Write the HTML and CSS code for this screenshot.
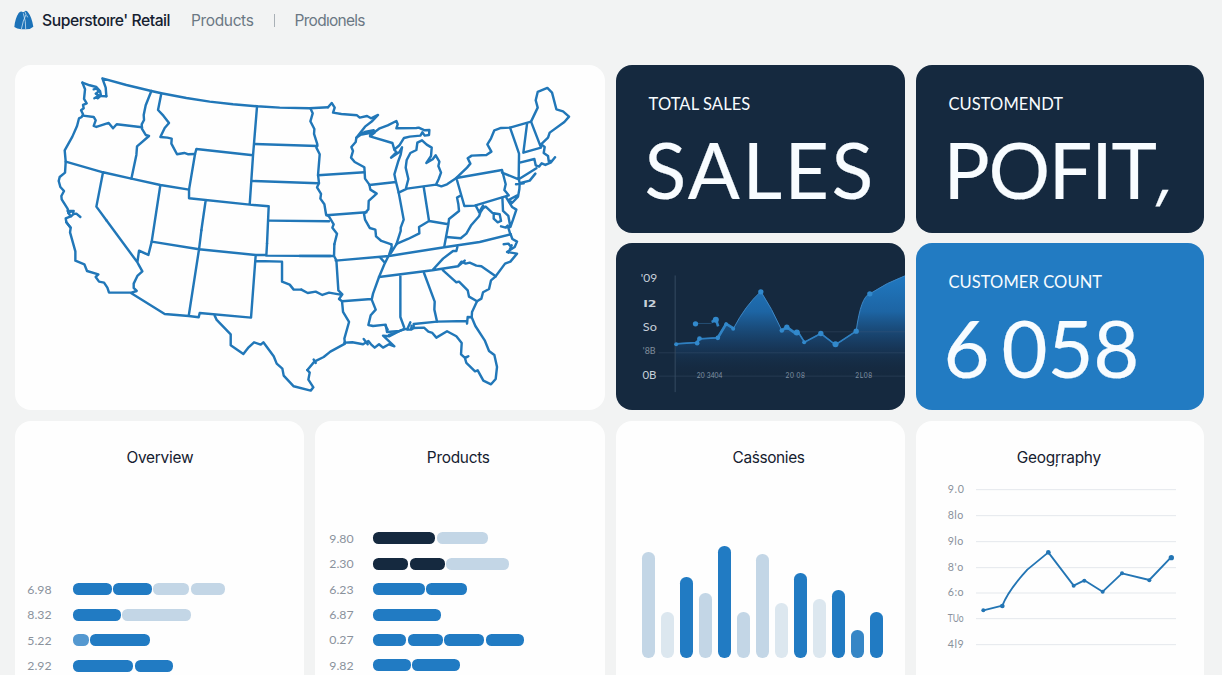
FILE: index.html
```html
<!DOCTYPE html>
<html lang="en">
<head>
<meta charset="utf-8">
<title>Superstore Retail</title>
<link rel="stylesheet" href="styles.css">
</head>
<body>
<header class="topbar">
  <svg class="logo" viewBox="0 0 60 60" width="20" height="20">
    <path d="M14 9Q20 1 27 7L31 5Q37-1 43 8Q53 20 58 50Q50 58 36 58H22Q8 57 1 51Q3 26 14 9Z" fill="#1c72b8"/>
    <path d="M22 58L28 33L36 14L33 5M35 57L34 35L28 10M38 16L41 22" fill="none" stroke="#d9ecf8" stroke-width="2.2"/>
  </svg>
  <span class="brand">Superstoıre' Retail</span>
  <nav class="nav"><a>Products</a><i class="sep"></i><a class="second">Prodıonels</a></nav>
</header>
<main class="grid">
  <section class="card map">
    <svg viewBox="15.3 64.7 590 345.5" width="590" height="345.5">
      <g class="states" transform="translate(40 64) scale(.33333)">
        <path d="M200 96L198 70L188 42L260 62L335 80L365 87L440 101L510 112L580 120L652 126L720 130L810 132L865 129"/>
        <path d="M128 55L150 63L170 68L181 80L184 95L200 96M162 75l10-3l4 10l-8 6l10 6l-14 8M184 94l-10 8"/>
        <path d="M128 55L136 75L133 104L141 117L130 122L132 132L124 138L130 150L126 158L118 162L112 185L98 217L75 258L78 292L76 325L60 338L57 350L62 368L73 380L65 395L66 405L84 434L86 446L93 456L78 462L80 474L92 490"/>
        <path d="M130 154L162 158L168 168L162 185L170 188L207 176L220 192L231 180L307 189"/>
        <path d="M335 80L318 123L312 152L313 167L306 180L307 194L318 212L328 215L292 246L290 272L275 343"/>
        <path d="M365 87L355 137L371 154L388 176L375 191L362 218L383 220L396 223L395 238L412 270L434 266L446 270L466 269"/>
        <path d="M78 292L190 324L275 343L362 362L448 376M190 324L170 427L200 468M362 362L336 532"/>
        <path d="M466 269L470 254L640 273M466 269L448 376L448 402L630 421L687 426L682 538M652 126L640 273L630 421M498 408L485 498"/>
        <path d="M645 239L833 245M638 350L835 357M687 469L868 471"/>
        <path d="M86 446l12-6l4 9l8-1l12 10M84 440l18 0M94 456l9-8"/>
      </g>
      <g class="states" transform="translate(300 64) scale(.33333)">
        <path d="M85 129L96 116L105 130L100 145L125 149L172 153L180 160L202 155L214 162L235 152L218 170L196 187L170 220L195 203L222 198L211 214L240 192L264 183L290 170L294 180L290 192L350 191L357 190L375 198L389 197L388 212L375 214L368 204L362 214L330 217L313 221L300 242L284 256L278 236L211 216L225 205M178 212L210 206"/>
        <path d="M32 132L39 147L32 171L44 194L43 209L53 240L50 250L60 270L55 332L58 357L52 369L64 389L62 403L74 420L79 450L88 457L102 480L98 490L112 508L104 540"/>
        <path d="M170 220L168 233L155 248L160 260L154 280L165 293L194 309L196 343L209 361L212 376L231 388L207 410L206 435L193 449L196 466L210 491L227 496L229 516L245 530L275 540"/>
        <path d="M55 333L194 324M80 453L200 444M209 362L289 353M284 256L290 264L274 280L300 262L307 249L303 271L296 290L284 330L289 353L297 385L312 466L303 490L303 500L290 540"/>
        <path d="M297 385L322 373L409 361L425 366L442 360L470 341L502 310L512 298L504 282L516 274L560 272L575 262L563 240L574 222L584 198L604 191L631 190L694 172M318 375L326 344L318 310L321 287L332 266L350 257L353 235L367 228L381 241L396 250L394 275L380 296L399 285L408 273L419 292L416 305L424 325L417 344L409 361"/>
        <path d="M372 368L388 470L446 480M470 341L494 425L525 424L627 393L614 377L618 360L607 317L470 341M388 470L358 488L359 507L325 524L292 538M484 393L472 400L476 420L478 440L448 464L446 480L434 545"/>
        <path d="M631 190L647 236L658 268L657 343L660 357M607 325L657 345L710 312M694 172L714 130L708 108L714 83L743 71L757 85L770 135L790 141L808 157L794 173L750 205L745 220L724 240M694 172L724 250L671 265L682 179M724 240L735 248L732 266L745 275L747 290L757 290L766 279L754 294L737 302L726 297L718 307L708 303L704 284L660 295M660 357L690 349L707 328M660 357L659 374L655 397L637 416L629 406L653 393M620 400L637 428L650 436L640 466L632 488L620 488M608 400L610 440L626 455L632 488M649 360L672 357"/>
        <path d="M528 424L540 447L550 432L558 427L578 446L600 450L604 470L594 474L582 463L582 450M545 436L538 456L515 482L500 508L483 522L440 518M604 486L618 490L624 484L632 510M550 424l-12 20"/>
      </g>
      <g class="states" transform="translate(40 220) scale(.33333)">
        <path d="M80 6L93 22L91 36L107 93L107 121L134 132L142 152L176 162L168 170L178 184L193 187L203 202L208 217L275 217L291 212L282 203L282 190L293 167L308 153L293 126L200 0M293 126L298 91L326 104L336 64M275 219L375 281L447 287L477 291L480 278L634 292L648 104L680 104L682 70M336 64L478 87L648 104M478 87L447 287M478 87L485 30M680 106L872 107M650 122L727 124L727 184L750 193L762 208L785 208"/>
        <path d="M525 286L531 299L573 342L573 375L611 401L625 383L643 366L663 373L671 366L702 408L711 430L728 445L732 466L762 498L813 511L821 501L806 478L810 457L803 449"/>
      </g>
      <g class="states" transform="translate(300 220) scale(.33333)">
        <path d="M0 107L103 107M104 72L103 107L110 120L116 210L128 222L118 236L127 243L130 275L148 305L134 355L136 370L92 394L72 410L44 424L23 449M42 418l6 10M5 208L24 218L48 214L68 224L88 217L122 223"/>
        <path d="M108 121L268 107L434 81L540 65L633 42M127 243L215 236M275 72L276 80L268 104L254 132L238 170L220 220L216 238L228 268L213 285L206 314L220 317L258 313L262 335L300 332L316 326M242 112L254 126M290 72L274 98"/>
        <path d="M238 170L398 150L475 138L495 121M302 164L302 290L313 320M373 158L405 244L404 268L412 304L342 311L342 323M398 150L430 115L460 92L470 92L473 80M430 150L470 186L478 184L504 210L508 229L532 243M475 138L485 124L498 130L510 127L530 136L545 138L588 168"/>
        <path d="M412 304L502 302L502 310L504 290L516 291L517 275L532 243L545 235L550 216L568 206L574 180L588 168L616 130L632 124L652 100L622 95L645 80L652 64L638 56L633 42M612 72l14-2l8 10M636 75l-10 22"/>
        <path d="M134 367L158 366L190 372L206 362L214 372L225 382L238 372L250 382L268 372L284 378L262 357L250 346L268 348L300 332L316 326L334 328L342 323L373 322L386 334L398 338L410 352L442 333L470 348L486 368L484 402L495 412L506 408L496 414L500 428L526 453L534 450L551 481L574 492L588 476L592 440L584 404L568 392L555 360L527 317L516 291M192 356l12 16M268 344l18-6M322 328l10-22M334 328l2-12M258 318l6 10"/>
      </g>
    </svg>
  </section>
  <section class="card kpi dark"><h2>TOTAL SALES</h2><p class="value sales">SALES</p></section>
  <section class="card kpi dark"><h2>CUSTOMENDT</h2><p class="value profit">POFIT<span class="comma">,</span></p></section>
  <section class="card dark trend">
    <svg viewBox="17.5 9.6 867 501" width="289" height="167">
      <defs>
        <linearGradient id="fill" gradientUnits="userSpaceOnUse" x1="0" y1="110" x2="0" y2="410">
          <stop offset="0" stop-color="#2078c0"/><stop offset=".35" stop-color="#1d65a4"/><stop offset=".7" stop-color="#183e66" stop-opacity=".7"/><stop offset="1" stop-color="#15293f" stop-opacity="0"/>
        </linearGradient>
      </defs>
      <path d="M197 312L260 308L268 297L323 294L348 252L370 266Q405 198 452 155Q485 205 515 272L530 262L558 282L563 275L583 307L632 281L676 315L738 274Q752 170 779 162Q830 128 887 107V410H197Z" fill="url(#fill)"/>
      <g stroke="#496078" stroke-width="1.6" opacity=".6"><path d="M145 339H887M145 409H887M520 276H887"/><path d="M195 107V457" stroke-width="3"/></g>
      <path class="trend-line" d="M197 312L260 308L268 297L323 294L348 252L370 266Q405 198 452 155Q485 205 515 272L530 262L558 282L563 275L583 307L632 281L676 315L738 274Q752 170 779 162Q830 128 887 107"/>
      <path class="trend-bold" d="M197 312L260 308L268 297L323 294L348 252L370 266M515 272L530 262L558 282L563 275L583 307L632 281L676 315L738 274"/>
      <path class="trend-line" d="M256 251H302L317 240" opacity=".4"/>
      <path d="M305 247L317 238L324 260M260 309L268 296M323 294L348 252L370 266M515 272L530 262L558 282" fill="none" stroke="#3083c4" stroke-width="8"/>
      <g fill="#3289cc"><circle cx="198" cy="313" r="6"/><circle cx="256" cy="252" r="8"/><circle cx="317" cy="240" r="9"/><circle cx="261" cy="310" r="7"/><circle cx="268" cy="296" r="7"/><circle cx="323" cy="294" r="7"/><circle cx="348" cy="253" r="6"/><circle cx="369" cy="267" r="6"/><circle cx="452" cy="156" r="8"/><circle cx="515" cy="272" r="7"/><circle cx="530" cy="262" r="8"/><circle cx="560" cy="278" r="9"/><circle cx="582" cy="307" r="6"/><circle cx="632" cy="281" r="8"/><circle cx="676" cy="313" r="9"/><circle cx="738" cy="274" r="8"/><circle cx="779" cy="162" r="8"/></g>
      <g class="trend-axis"><text x="92" y="128" textLength="49" lengthAdjust="spacingAndGlyphs">'09</text><text x="99" y="202" textLength="40" lengthAdjust="spacingAndGlyphs" class="strong">I2</text><text x="98" y="275" textLength="42" lengthAdjust="spacingAndGlyphs">So</text><text x="98" y="343" textLength="38" lengthAdjust="spacingAndGlyphs" class="dim">'8B</text><text x="97" y="418" textLength="42" lengthAdjust="spacingAndGlyphs">0B</text></g>
      <g class="trend-x"><text x="260" y="414" textLength="77">20 3404</text><text x="526" y="414" textLength="58">20 08</text><text x="735" y="414" textLength="51">2L08</text></g>
    </svg>
  </section>
  <section class="card kpi blue"><h2 class="count-label">CUSTOMER COUNT</h2><p class="value count">6<span class="digits">058</span></p></section>

  <section class="card panel">
    <h3>Overview</h3>
    <div class="hbars short">
      <div class="row"><span>6.98</span><b style="width:39px"></b><b style="width:38.7px"></b><b class="pale" style="width:35.7px"></b><b class="pale" style="width:34.3px"></b></div>
      <div class="row"><span>8.32</span><b style="width:48px"></b><b class="pale" style="width:69px"></b></div>
      <div class="row"><span>5.22</span><b class="mid" style="width:16px"></b><b style="width:59.5px"></b></div>
      <div class="row"><span>2.92</span><b style="width:60.3px"></b><b style="width:38.3px"></b></div>
    </div>
  </section>
  <section class="card panel">
    <h3 class="t-products">Products</h3>
    <div class="hbars">
      <div class="row"><span>9.80</span><b class="navy" style="width:62px"></b><b class="pale" style="width:51.7px"></b></div>
      <div class="row"><span>2.30</span><b class="navy" style="width:35px"></b><b class="navy" style="width:35.3px"></b><b class="pale" style="width:63px"></b></div>
      <div class="row"><span>6.23</span><b style="width:51.7px"></b><b style="width:40.7px"></b></div>
      <div class="row"><span>6.87</span><b style="width:68px"></b></div>
      <div class="row"><span>0.27</span><b style="width:33px"></b><b style="width:35px"></b><b style="width:40.3px"></b><b style="width:38.3px"></b></div>
      <div class="row"><span>9.82</span><b style="width:37.7px"></b><b style="width:48px"></b></div>
    </div>
  </section>
  <section class="card panel">
    <h3 class="t-cat">Caṡsonies</h3>
    <div class="vbars">
      <b class="pale" style="height:105.7px"></b><b class="faint" style="height:45.7px"></b><b style="height:80.7px"></b><b class="pale" style="height:65.3px"></b><b style="height:111.7px"></b><b class="pale" style="height:45.7px"></b><b class="pale" style="height:103.7px"></b><b class="faint" style="height:54.7px"></b><b style="height:84.7px"></b><b class="faint" style="height:59.3px"></b><b style="height:67.7px"></b><b class="mid2" style="height:27.7px"></b><b style="height:46.3px"></b>
    </div>
  </section>
  <section class="card panel">
    <h3 class="t-geo">Geogŗraphy</h3>
    <svg class="geo" viewBox="18 170 864 540" width="288" height="180">
      <path d="M198 208H798M198 286H798M198 364H798M198 442H798M198 518H798M198 595H798M198 673H798" stroke="#e4e8ec" stroke-width="3"/>
      <path d="M220 570L277 556Q295 510 352 448L415 396L491 496L523 480L578 514L636 459L718 479L783 411" fill="none" stroke="#2375b4" stroke-width="5.5" stroke-linejoin="round"/>
      <g fill="#2375b4"><circle cx="220" cy="570" r="6"/><circle cx="277" cy="557" r="7"/><circle cx="415" cy="396" r="7"/><circle cx="491" cy="496" r="6"/><circle cx="523" cy="481" r="6"/><circle cx="578" cy="514" r="6"/><circle cx="636" cy="459" r="6"/><circle cx="718" cy="480" r="6"/><circle cx="784" cy="412" r="8"/></g>
      <g class="geo-axis"><text x="113" y="219" textLength="49">9.0</text><text x="113" y="296" textLength="47">8lo</text><text x="113" y="374" textLength="47">9lo</text><text x="113" y="451" textLength="47">8'o</text><text x="113" y="528" textLength="48">6:o</text><text x="113" y="605" textLength="48" lengthAdjust="spacingAndGlyphs">TUo</text><text x="113" y="682" textLength="48">4l9</text></g>
    </svg>
  </section>
</main>
</body>
</html>
```
FILE: styles.css
```css
* { box-sizing: border-box; }
body {
  margin: 0;
  height: 675px;
  overflow: hidden;
  background: #f2f3f3;
  color: #15202f;
  font-family: Lato, "Open Sans", sans-serif;
}
h2, h3, p { margin: 0; font-weight: 400; }
.topbar {
  display: flex;
  align-items: center;
  height: 40px;
  padding-left: 14px;
  margin-bottom: 24.7px;
}
.brand { margin-left: 8px; width: 149px; font: 500 15.7px Inter, sans-serif; letter-spacing: -.46px; white-space: nowrap; }
.nav { display: flex; align-items: center; color: #6b7884; font: 400 15.5px Inter, sans-serif; letter-spacing: -.36px; }
.nav .second { letter-spacing: -.72px; }
.sep { width: 1px; height: 13px; margin: 0 20px; background: #a9b0b6; }
.grid {
  display: grid;
  grid-template-columns: 289.2px 290px 289px 288px;
  grid-template-rows: 168px 167px 270px;
  gap: 10.5px 10.8px;
  padding-left: 15.3px;
}
.card { border-radius: 16px; background: #fefefe; overflow: hidden; }
.map { grid-column: span 2; grid-row: span 2; }
.map svg, .trend svg, .geo { display: block; }
.states path { fill: none; stroke: #2177b8; stroke-width: 7.3; stroke-linejoin: round; stroke-linecap: round; }
.dark { background: #15293f; }
.blue { background: #227bc2; }
.kpi { padding: 28px 0 0 32.5px; color: #f8fcff; }
.kpi h2 { font-size: 16.5px; line-height: 22px; letter-spacing: .1px; white-space: nowrap; }
.value { margin-left: -4px; font-size: 77px; line-height: 92px; margin-top: 8px; white-space: nowrap; -webkit-text-stroke: .2px #f8fcff; }
.sales { letter-spacing: 2.5px; }
.profit { letter-spacing: -1.2px; margin-left: -5px; }
.comma { display: inline-block; height: 60px; font: 400 60px/60px Inter, sans-serif; transform: translateY(-3px) skewX(-14deg); margin-left: 4px; }
.count { font-size: 79.5px; margin-top: 9px; margin-left: -5px; }
.digits { margin-left: 12px; letter-spacing: -.2px; }
.trend-line { fill: none; stroke: #3d86c4; stroke-width: 3; }
.trend-bold { fill: none; stroke: #2f7fc0; stroke-width: 5; }
.trend-axis { fill: #c6d0da; font-size: 34px; }
.trend-axis .strong { font-weight: 700; font-family: "DejaVu Sans", sans-serif; font-size: 28px; }
.trend-axis .dim { font-size: 29px; opacity: .6; }
.trend-x { fill: #7f91a3; font-size: 20px; }
.panel { padding-top: 24px; }
.panel h3 { text-align: center; font: 400 15.4px/25px Inter, sans-serif; margin-bottom: -1px; letter-spacing: -.25px; }
.panel .t-products { padding-right: 4px; }
.panel .t-cat { padding-left: 16px; letter-spacing: -.35px; }
.panel .t-geo { padding-right: 2px; }
.hbars { display: flex; flex-direction: column; padding: 57px 0 0 14px; }
.hbars.short { padding: 108px 0 0 12px; }
.row { display: flex; align-items: center; gap: 1.5px; height: 25.4px; }
.row span { width: 42.3px; color: #8a929c; font-size: 12.3px; }
.short .row span { width: 44px; }
.row b { height: 12px; border-radius: 5.5px; background: #217bc3; }
.row .pale, .vbars .pale { background: #c3d6e6; }
.row .mid { background: #5498d0; }
.row .navy { background: #15293f; }
.vbars { display: flex; align-items: flex-end; gap: 6.5px; height: 189.2px; padding-left: 26px; }
.vbars b { width: 12.5px; border-radius: 6.25px; background: #217bc3; }
.vbars .faint { background: #dce7ef; }
.vbars .mid2 { background: #3686c6; }
.geo { margin-top: 8px; }
.geo-axis { fill: #8a929c; font-size: 32px; }
```
